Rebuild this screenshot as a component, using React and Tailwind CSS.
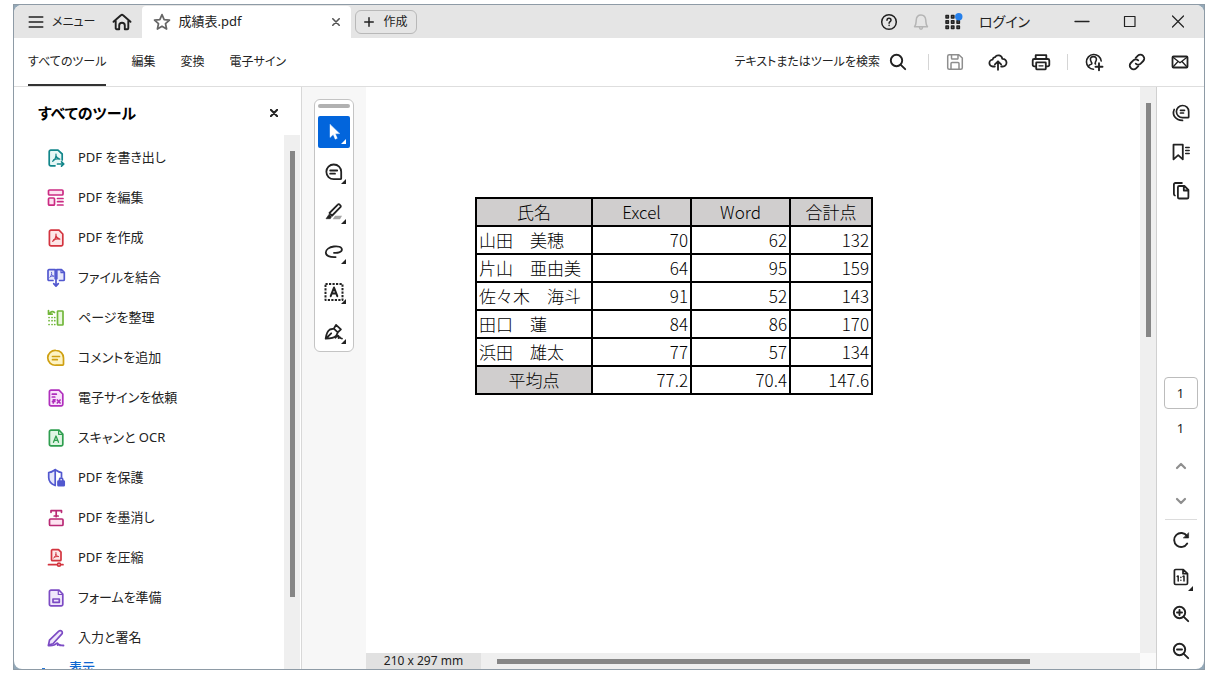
import { useState } from 'react'
import clsx from 'clsx'

function Icon({ children, className = 'size-5', width = 1.5 }) {
  return (
    <svg
      viewBox="0 0 20 20"
      className={clsx('shrink-0', className)}
      fill="none"
      stroke="currentColor"
      strokeWidth={width}
      strokeLinecap="round"
      strokeLinejoin="round"
      aria-hidden="true"
    >
      {children}
    </svg>
  )
}

const PAGE = 'M5 2.200h8L16.800 6v10.200a1.600 1.600 0 0 1-1.600 1.600H5a1.600 1.600 0 0 1-1.600-1.600V3.800A1.600 1.600 0 0 1 5 2.200z'
const ACRO = 'M10 6c.4 2.600-1.200 6-3.400 7.300M9.900 7.500c.5 2.200 1.700 3.300 3.900 3.700M7.600 11.900c1.700-.9 3.900-1.200 6-.7'

const tools = [
  {
    label: 'PDF を書き出し',
    color: 'text-[#12868a]',
    icon: (
      <>
        <path d="M9 17.800H4.800A1.600 1.600 0 0 1 3.200 16.200V3.800A1.600 1.600 0 0 1 4.800 2.200H12L16.200 6v6" fill="#e6f7f6" />
        <path d={ACRO} strokeWidth="1.200" />
        <path d="M11.500 16h6M15.500 13.800l2.300 2.200-2.300 2.200" />
      </>
    ),
  },
  {
    label: 'PDF を編集',
    color: 'text-[#cb2b83]',
    icon: (
      <>
        <rect x="2.500" y="2" width="14.500" height="5" rx="1" fill="#fde3f1" />
        <rect x="2.500" y="10" width="6" height="7.200" rx="1" fill="#fde3f1" />
        <path d="M11.500 10.500h5.500M11.500 13.700h5.500M11.500 17h5.500" />
      </>
    ),
  },
  {
    label: 'PDF を作成',
    color: 'text-[#d3343f]',
    icon: (
      <>
        <path d={PAGE} fill="#fde6e7" />
        <path d={ACRO} strokeWidth="1.200" />
      </>
    ),
  },
  {
    label: 'ファイルを結合',
    color: 'text-[#5258cf]',
    icon: (
      <>
        <path d="M7 12.500H3A1 1 0 0 1 2 11.500V2.700a1 1 0 0 1 1-1h6.200v9M10.800 10.700v-9h4.700l2.800 2.600v7.200a1 1 0 0 1-1 1H13.500" fill="#e6e7fb" />
        <path d="M15 1.900v2.800h3" strokeWidth="1.200" />
        <path d="M5.600 4.300c.5 2-.6 4-1.700 5M5.700 6.500c.6 1.200 1.200 1.600 2.200 1.700M4.300 8.600c1-.5 2-.6 3.200-.5" strokeWidth=".9" />
        <path d="M10 10v8M7.700 15.700 10 18.200l2.300-2.500" />
      </>
    ),
  },
  {
    label: 'ページを整理',
    color: 'text-[#72b73b]',
    icon: (
      <>
        <rect x="11.500" y="3" width="5.500" height="14" rx=".6" fill="#eaf7df" />
        <path d="M3.500 5.500C5 3.500 7 3 8.500 4.500M2.500 2.500v3.700h3.700" />
        <path d="M3 9.500h.1M3 12.700h.1M3 16.500h.1M6 16.500h.1M8.700 16.500h.1M8.700 12.700h.1M8.700 9.500h.1M6 9.500h.1M6 12.700h.1" strokeWidth="1.700" />
      </>
    ),
  },
  {
    label: 'コメントを追加',
    color: 'text-[#cfa012]',
    icon: (
      <>
        <path d="M10 2.500c4.300 0 7.500 3.300 7.500 7.500v6.300a.9.900 0 0 1-.9.900H10a7.400 7.400 0 1 1 0-14.700z" fill="#fdf3c4" />
        <path d="M6.500 8.500h7M6.500 11.700h4.800" />
      </>
    ),
  },
  {
    label: '電子サインを依頼',
    color: 'text-[#b02fbd]',
    icon: (
      <>
        <path d={PAGE} fill="#f9e3fb" />
        <path d="M6.300 6.200h4M6.300 9h2.500M7.300 15v-3.200h1.800M6.500 13.500h2.300M11.300 12l2.800 3M14.100 12l-2.800 3" />
      </>
    ),
  },
  {
    label: 'スキャンと OCR',
    color: 'text-[#2f9e4f]',
    icon: (
      <>
        <path d={PAGE} fill="#e0f5e4" />
        <path d="M12.600 2.500v3.800h4" strokeWidth="1.200" />
        <path d="M7.500 14.300 10 8l2.500 6.300M8.300 12.300h3.400" strokeWidth="1.300" />
      </>
    ),
  },
  {
    label: 'PDF を保護',
    color: 'text-[#5258cf]',
    icon: (
      <>
        <path d="M9.200 1.700C7 3.300 5 4.300 2.700 4.500v5c0 3.700 2.600 6.500 6.500 8z" fill="#e6e7fb" />
        <path d="M15.500 9V4.500C13.500 4.300 11.500 3.300 9.200 1.700" />
        <rect x="12" y="13" width="6.200" height="4.700" rx=".5" fill="currentColor" />
        <path d="M13.500 13v-1.200a1.650 1.650 0 0 1 3.300 0V13" />
      </>
    ),
  },
  {
    label: 'PDF を墨消し',
    color: 'text-[#b92a75]',
    icon: (
      <>
        <rect x="3.500" y="11" width="13.500" height="6.500" rx="1" fill="#fde3f1" />
        <path d="M5 4.300V2.700h10.500v1.600M10.200 2.700v6M8.200 8h4" />
      </>
    ),
  },
  {
    label: 'PDF を圧縮',
    color: 'text-[#d3343f]',
    icon: (
      <>
        <path d="M6.500 1.700h6l2.500 2.500v7.500a1 1 0 0 1-1 1H6.500a1 1 0 0 1-1-1v-9a1 1 0 0 1 1-1z" fill="#fde6e7" />
        <path d="M10 4.500c.4 2-.8 4.500-2.300 5.500M9.900 6.300c.5 1.500 1.300 2 2.600 2.200M8.200 9.300c1-.6 2.500-.9 4-.7" strokeWidth="1" />
        <path d="M2.500 16.700h8.500M15 16.700h2" />
        <circle cx="13" cy="16.700" r="1.500" />
      </>
    ),
  },
  {
    label: 'フォームを準備',
    color: 'text-[#7c4bc4]',
    icon: (
      <>
        <path d={PAGE} fill="#efe6fb" />
        <path d="M12.300 2.500v4h4" strokeWidth="1.200" />
        <rect x="7" y="11" width="6.300" height="3.300" />
      </>
    ),
  },
  {
    label: '入力と署名',
    color: 'text-[#7c4bc4]',
    icon: (
      <>
        <path d="M2.500 17l1-4.800 9.300-9a2 2 0 0 1 2.900 0 2 2 0 0 1 0 2.900L7 15.700z" fill="#efe6fb" />
        <path d="M2.500 17.500c4.500.3 6.500-.3 8-2 1.200-1.200 1.700.3 1.200 1.600 1-.8 1.800-.8 2.300.2.800-.2 2 .2 3.500.2" strokeWidth="1.800" />
      </>
    ),
  },
]

const quickTools = [
  {
    label: '選択',
    icon: <path d="M6 2.500v13l3.200-3 2 4.700 2.100-.9-2-4.500 4.200-.2z" fill="currentColor" strokeWidth=".4" />,
  },
  {
    label: 'コメント',
    icon: (
      <>
        <path d="M9.700 2.500c4.400 0 7.500 3.100 7.500 7.300v6.400a1 1 0 0 1-1 1H9.700a7.350 7.350 0 1 1 0-14.700z" />
        <path d="M6.200 8.500h7M6.200 11.700h4.800" />
      </>
    ),
  },
  {
    label: 'ハイライト',
    icon: (
      <>
        <path d="M7 12.700 5.500 11 13.800 2.600a1.300 1.300 0 0 1 1.900 0l.7.700a1.300 1.300 0 0 1 0 1.900L8.200 13.500z" />
        <path d="M5.300 12 2 16.700h4.300l1.200-1.900z" fill="currentColor" strokeWidth=".6" />
        <path d="M11 13.700h7L16 17.200H8.700z" fill="#a3a3a3" stroke="none" />
      </>
    ),
  },
  {
    label: '描画',
    icon: <path d="M10 10.800c3.200.5 7.900-.4 7.900-3.300 0-2.800-4.300-3.500-8-3C5.300 5.100 1.800 7.500 1.800 10.600c0 3.200 3.800 4.800 9.800 4.500" />,
  },
  {
    label: 'テキスト',
    icon: (
      <>
        <rect x="1.500" y="2" width="17" height="16" strokeDasharray="2.200 1.300" strokeLinecap="butt" strokeWidth="2" />
        <path d="M6.700 14.200 10 5.500l3.300 8.700M7.900 11.500h4.200" strokeWidth="2" />
      </>
    ),
  },
  {
    label: '署名',
    icon: (
      <>
        <path d="M1.700 16.700c.5-4.200 1.600-7.700 4.200-9.200l3.900-.8 4 3.700-1.500 3.300c-1.600 1.800-5.500 3-10.600 3zM2 16.500l5.200-5.200M9.800 6.700 12 2.900l4.900 4.500-3.100 3" />
        <path d="M11.500 15.800c1.700-2.100 3.300-3 3-1-.3 1.600 0 1.800 1.300.3.300 1 .8 1.500 2.200 1.500" />
      </>
    ),
  },
]

const rows = [
  ['山田　美穂', '70', '62', '132'],
  ['片山　亜由美', '64', '95', '159'],
  ['佐々木　海斗', '91', '52', '143'],
  ['田口　蓮', '84', '86', '170'],
  ['浜田　雄太', '77', '57', '134'],
]

const tabs = ['すべてのツール', '編集', '変換', '電子サイン']

function IconButton({ label, children, className = 'size-5' }) {
  return (
    <button type="button" aria-label={label} className={clsx('relative flex items-center justify-center', className)}>
      {children}
    </button>
  )
}

// Small triangle that marks a tool with more options
function Corner({ className }) {
  return (
    <svg viewBox="0 0 5 5" className={clsx('absolute size-[5px]', className)} aria-hidden="true">
      <path d="M5 0v5H0z" fill="currentColor" />
    </svg>
  )
}

function TitleBar() {
  return (
    <header className="flex h-[33px] shrink-0 bg-[#e5e5e5]">
      <button type="button" className="flex items-center gap-2 pl-3.5 text-xs">
        <Icon className="size-4" width={1.800}>
          <path d="M1.500 3.800h17M1.500 10h17M1.500 16.200h17" />
        </Icon>
        メニュー
      </button>
      <IconButton label="ホーム" className="my-auto ml-4 mr-2.5 size-5">
        <Icon width={1.900}>
          <path d="M1.500 9.800 8.900 3.200a1.600 1.600 0 0 1 2.200 0l7.400 6.600M3.700 9v7.200a1 1 0 0 0 1 1h2.500v-3.600a2.800 2.800 0 0 1 5.600 0v3.600h2.500a1 1 0 0 0 1-1V9" />
        </Icon>
      </IconButton>
      <div className="mt-px flex w-[209px] items-center gap-2 rounded-t-sm bg-white px-[11px] text-[13px]">
        <Icon className="size-[18px] text-[#666]" width={1.900}>
          <path d="M10 1.800l2.400 5.500 5.900.6-4.400 4 1.200 5.900L10 14.800l-5.100 3 1.200-5.900-4.400-4 5.900-.6z" />
        </Icon>
        <span className="flex-1">成績表.pdf</span>
        <IconButton label="タブを閉じる" className="size-2 text-[#555]">
          <Icon className="size-2" width={4}>
            <path d="M2 2l16 16M18 2 2 18" />
          </Icon>
        </IconButton>
      </div>
      <button type="button" className="my-auto ml-1 flex h-6 items-center gap-2.5 rounded-md border border-[#b8b8b8] px-2 text-xs">
        <Icon className="size-2.5" width={3}>
          <path d="M10 1.500v17M1.500 10h17" />
        </Icon>
        作成
      </button>
      <div className="ml-auto flex items-center gap-3">
        <IconButton label="ヘルプ">
          <Icon>
            <circle cx="10" cy="10" r="7.300" />
            <path d="M8 8.200c.1-2.600 4-2.400 4 0 0 1.500-1.900 1.400-1.900 3M10.100 13.300v.1" />
          </Icon>
        </IconButton>
        <IconButton label="通知" className="size-5 text-[#b5b5b5]">
          <Icon>
            <path d="M3.500 14.700c1.700-1.500 1.500-3.500 1.700-6.400C5.400 5.200 7.400 3 10 3s4.600 2.200 4.800 5.300c.2 2.900 0 4.900 1.700 6.400zM8.500 15.500c.2 2.300 2.800 2.300 3 0" />
          </Icon>
        </IconButton>
        <IconButton label="アプリ">
          <Icon width={1.500}>
            {[4, 9.200, 14.400].map((y) =>
              [3.500, 9, 14.500].map((x) => <rect key={`${x}-${y}`} x={x - 0.500} y={y - 0.400} width="2.400" height="2.400" fill="#777" />)
            )}
            <circle cx="15.800" cy="4.800" r="3.700" fill="#2680eb" stroke="none" />
          </Icon>
        </IconButton>
        <button type="button" className="mr-7 ml-1 text-sm">ログイン</button>
      </div>
      <div className="flex pr-0.5">
        <button type="button" aria-label="最小化" className="flex w-12 items-center justify-center">
          <Icon width={1.300}><path d="M3 9.500h14" /></Icon>
        </button>
        <button type="button" aria-label="最大化" className="flex w-12 items-center justify-center">
          <Icon width={1.200}><path d="M4.500 4.500h10.500v10H4.500z" /></Icon>
        </button>
        <button type="button" aria-label="閉じる" className="flex w-12 items-center justify-center">
          <Icon width={1.200}><path d="M4.500 4l11 11M15.500 4l-11 11" /></Icon>
        </button>
      </div>
    </header>
  )
}

function Toolbar() {
  const [active, setActive] = useState(tabs[0])

  return (
    <div className="flex h-[49px] shrink-0 items-center border-b border-[#dedede] px-3.5">
      <nav className="flex gap-[25px] self-stretch text-xs">
        {tabs.map((tab) => (
          <button
            key={tab}
            type="button"
            onClick={() => setActive(tab)}
            className={clsx('border-y-2 border-t-transparent', tab === active ? 'border-b-[#333]' : 'border-b-transparent')}
          >
            {tab}
          </button>
        ))}
      </nav>
      <div className="ml-auto flex items-center gap-4">
        <button type="button" className="mr-1 flex items-center gap-2 text-xs">
          テキストまたはツールを検索
          <Icon width={1.900}>
            <circle cx="8.500" cy="8.500" r="5.700" />
            <path d="M12.800 12.800 17.200 17.200" />
          </Icon>
        </button>
        <span className="h-4 w-px bg-[#d5d5d5]" />
        <div className="flex gap-[23px]">
          <IconButton label="保存" className="size-5 text-[#8e8e8e]">
            <Icon>
              <path d="M4.200 2.700h9.600l3.500 3.300v9.800a1.500 1.500 0 0 1-1.500 1.500H4.200a1.500 1.500 0 0 1-1.500-1.500V4.200a1.500 1.500 0 0 1 1.500-1.500zM6 17v-5.500a1 1 0 0 1 1-1h6a1 1 0 0 1 1 1V17M6.500 3v3.300a.8.800 0 0 0 .8.800h4.900a.8.800 0 0 0 .8-.8V3" />
            </Icon>
          </IconButton>
          <IconButton label="アップロード">
            <Icon width={1.800}>
              <path d="M6.800 14.500H5a3.400 3.400 0 0 1-.4-6.800A3.200 3.200 0 0 1 7 5.200a4 4 0 0 1 7.300 1.600c2.500-.2 4.200 1.700 4.200 3.800a3.700 3.700 0 0 1-3.800 3.900h-1.500M10 17.800V9.500M6.900 12.300 10 9.300l3.100 3" />
            </Icon>
          </IconButton>
          <IconButton label="印刷">
            <Icon width={1.800}>
              <path d="M5 14.300H3.200a1.500 1.500 0 0 1-1.500-1.500V8.500A1.500 1.500 0 0 1 3.200 7h13.600a1.500 1.500 0 0 1 1.500 1.500v4.300a1.500 1.500 0 0 1-1.500 1.500H15M4.700 6.800V3.200h10.600v3.600" />
              <rect x="5.200" y="10.300" width="9.600" height="7" rx=".5" />
              <path d="M8 13.800h4" strokeWidth="1.300" />
            </Icon>
          </IconButton>
        </div>
        <span className="h-4 w-px bg-[#d5d5d5]" />
        <div className="flex gap-[23px]">
          <IconButton label="共有">
            <Icon width={1.600}>
              <path d="M9.500 17.300A7.400 7.400 0 1 1 17.200 9" />
              <path d="M4.500 14.700c.3-1.800 1.500-2.300 2.700-2.500.9-.2.700-1.200.2-1.900-2-3-1-5.700 2-5.700s4 2.700 2 5.700c-.4.700-.4 1.400.1 1.700" />
              <path d="M15 11.300v6.900M11.500 14.800h7" strokeWidth="1.900" />
            </Icon>
          </IconButton>
          <IconButton label="リンク">
            <Icon width={1.800}>
              <path d="M8.700 5.900l2.200-2.200a3.500 3.500 0 0 1 4.950 0l.4.400a3.500 3.500 0 0 1 0 4.900l-2.600 2.600a3.500 3.500 0 0 1-4.900 0" />
              <path d="M11.300 14.100l-2.200 2.200a3.500 3.500 0 0 1-4.950 0l-.4-.4a3.500 3.500 0 0 1 0-4.900l2.600-2.600a3.500 3.500 0 0 1 4.900 0" />
            </Icon>
          </IconButton>
          <IconButton label="メール">
            <Icon width={1.800}>
              <rect x="2.500" y="4.500" width="15" height="11" rx="1" />
              <path d="M3 5.200l7 5.600 7-5.600M3 15l5-5.500M17 15l-5-5.500" strokeWidth="1.300" />
            </Icon>
          </IconButton>
        </div>
      </div>
    </div>
  )
}

function Sidebar() {
  return (
    <aside className="flex w-72 shrink-0 flex-col border-r border-[#d8d8d8]">
      <div className="flex h-12 shrink-0 items-center justify-between pt-1 pr-[23px] pl-6">
        <h2 className="text-[15px] font-bold text-black">すべてのツール</h2>
        <IconButton label="パネルを閉じる" className="size-2">
          <Icon className="size-2" width={5}>
            <path d="M2 2l16 16M18 2 2 18" />
          </Icon>
        </IconButton>
      </div>
      <div className="flex min-h-0 flex-1 pr-px">
        <div className="flex-1 overflow-hidden pt-[3px]">
          <ul>
            {tools.map((tool) => (
              <li key={tool.label}>
                <button type="button" className="flex h-10 w-full items-center gap-3 pl-8 text-left text-[13px]">
                  <Icon className={clsx('size-5', tool.color)} width={1.700}>{tool.icon}</Icon>
                  {tool.label}
                </button>
              </li>
            ))}
          </ul>
          <a href="#view" className="flex h-5 items-center gap-6 pl-7 text-[13px] font-medium text-[#0d66d0]">
            <Icon className="size-[3px]" width={6}><path d="M0 10h20" /></Icon>
            表示
          </a>
        </div>
        <div className="flex w-4 justify-center bg-[#efefef] pt-4 pb-[72px]">
          <div className="w-[5px] bg-[#868686]" />
        </div>
      </div>
    </aside>
  )
}

function QuickTools() {
  const [active, setActive] = useState(0)

  return (
    <div className="w-16 shrink-0 bg-[#f7f7f7] px-3 pt-3">
      <div className="flex flex-col items-center gap-2 rounded-md border border-[#c4c4c4] bg-white pt-1 pb-[3px]">
        <div className="h-1 w-8 rounded-full bg-[#b1b1b1]" />
        {quickTools.map((tool, index) => (
          <button
            key={tool.label}
            type="button"
            aria-label={tool.label}
            onClick={() => setActive(index)}
            className={clsx(
              'relative flex size-8 items-center justify-center rounded-xs',
              active === index ? 'bg-[#0265dc] text-white' : 'text-[#222]'
            )}
          >
            <Icon width={1.800}>{tool.icon}</Icon>
            <Corner className="right-1 bottom-1" />
          </button>
        ))}
      </div>
    </div>
  )
}

function ScoreTable() {
  const cell = 'border-2 border-black px-0.5'
  const head = 'border-2 border-black bg-[#d0cece] text-center font-light'

  return (
    <table className="w-[398px] table-fixed border-collapse font-['Noto_Sans_CJK_JP',sans-serif] text-[17px] leading-[26px] font-light text-black [font-feature-settings:normal]">
      <colgroup>
        <col className="w-[116px]" />
        <col className="w-[99px]" />
        <col className="w-[99px]" />
        <col />
      </colgroup>
      <thead>
        <tr>
          {['氏名', 'Excel', 'Word', '合計点'].map((title) => (
            <th key={title} scope="col" className={head}>{title}</th>
          ))}
        </tr>
      </thead>
      <tbody>
        {rows.map(([name, ...scores]) => (
          <tr key={name}>
            <td className={cell}>{name}</td>
            {scores.map((score, i) => (
              <td key={i} className={clsx(cell, 'text-right')}>{score}</td>
            ))}
          </tr>
        ))}
      </tbody>
      <tfoot>
        <tr>
          <th scope="row" className={head}>平均点</th>
          {['77.2', '70.4', '147.6'].map((avg) => (
            <td key={avg} className={clsx(cell, 'text-right')}>{avg}</td>
          ))}
        </tr>
      </tfoot>
    </table>
  )
}

function DocumentView() {
  return (
    <main className="flex min-w-0 flex-1 flex-col">
      <div className="flex min-h-0 flex-1">
        <div className="min-w-0 flex-1 overflow-hidden bg-white pt-[110px] pl-[109px]">
          <ScoreTable />
        </div>
        <div className="flex w-4 items-start justify-center bg-[#efefef] pt-4">
          <div className="h-[234px] w-[5px] bg-[#868686]" />
        </div>
      </div>
      <div className="flex h-4 shrink-0 bg-[#efefef]">
        <div className="flex w-[115px] items-center justify-center bg-[#e1e1e1] text-xs leading-4">210 x 297 mm</div>
        <div className="flex flex-1 items-center pr-[110px] pl-4">
          <div className="h-[5px] flex-1 bg-[#868686]" />
        </div>
        <div className="w-4 bg-[#fafafa]" />
      </div>
    </main>
  )
}

function Rail() {
  return (
    <aside className="flex w-12 shrink-0 flex-col items-center justify-between border-l border-[#d0d0d0] pt-4 pb-2">
      <div className="flex flex-col gap-[19px]">
        <IconButton label="コメント">
          <Icon width={1.700}>
            <path d="M11.500 2.500c3.500 0 6.200 2.600 6.200 6v5.400a.8.800 0 0 1-.8.800h-5.400a6.100 6.100 0 1 1 0-12.200z" />
            <path d="M9.500 7.300h4M9.500 10h3M3.200 6.500c-2.400 5.500 1.500 11 8.300 10.900" />
          </Icon>
        </IconButton>
        <IconButton label="しおり">
          <Icon width={1.800}>
            <path d="M2.500 2.700h9.300v14.600l-4.600-4.200-4.700 4.200z" />
            <path d="M14.700 5.500h3.500M14.700 8.500h3.500M14.700 11.500h3.500" strokeWidth="1.500" />
          </Icon>
        </IconButton>
        <IconButton label="ページサムネール">
          <Icon width={1.800}>
            <path d="M8.200 5h5.200l4 3.900v7.300a1.300 1.300 0 0 1-1.300 1.300H8.200a1.300 1.300 0 0 1-1.300-1.300V6.300A1.300 1.300 0 0 1 8.200 5zM12.800 5.300v4.200h4.300" />
            <path d="M3.900 14.500a1.500 1.500 0 0 1-1-1.400V3.500A1.500 1.500 0 0 1 4.400 2h6.500" />
          </Icon>
        </IconButton>
      </div>
      <div className="flex flex-col items-center">
        <input
          aria-label="ページ番号"
          defaultValue="1"
          className="h-8 w-[34px] rounded-sm border border-[#bcbcbc] text-center text-[13px]"
        />
        <span className="mt-[9px] text-[13px] leading-5">1</span>
        <IconButton label="前のページ" className="mt-[18px] size-5 text-[#8e8e8e]">
          <Icon width={2.200}><path d="M6 12l4-4 4 4" /></Icon>
        </IconButton>
        <IconButton label="次のページ" className="mt-[15px] size-5 text-[#8e8e8e]">
          <Icon width={2.200}><path d="M6 8l4 4 4-4" /></Icon>
        </IconButton>
        <span className="my-2 h-px w-8 bg-[#dcdcdc]" />
        <div className="mt-0.5 flex flex-col gap-[17px]">
          <IconButton label="回転">
            <Icon width={1.900}>
              <path d="M16.200 13.500a7 7 0 1 1-.3-7.600" />
              <path d="M17.600 3v5h-5z" fill="currentColor" strokeWidth=".6" />
            </Icon>
          </IconButton>
          <IconButton label="実際のサイズ">
            <Icon width={1.700}>
              <path d="M4.700 2.500h7.600l4.200 4v9.700a1.300 1.300 0 0 1-1.300 1.300H4.700a1.300 1.300 0 0 1-1.300-1.300V3.800a1.300 1.300 0 0 1 1.300-1.300zM12 2.700v4h4.300" />
              <path d="M6.200 9.500l1-.5v5M12 9.500l1-.5v5M9.900 10.300v.1M9.900 13.200v.1" strokeWidth="1.500" />
            </Icon>
            <Corner className="-right-0.5 -bottom-1" />
          </IconButton>
          <IconButton label="拡大">
            <Icon width={1.900}>
              <circle cx="8.500" cy="8.500" r="5.700" />
              <path d="M12.800 12.800 17.200 17.200M8.500 6v5M6 8.500h5" />
            </Icon>
          </IconButton>
          <IconButton label="縮小">
            <Icon width={1.900}>
              <circle cx="8.500" cy="8.500" r="5.700" />
              <path d="M12.800 12.800 17.200 17.200M6 8.500h5" />
            </Icon>
          </IconButton>
        </div>
      </div>
    </aside>
  )
}

function App() {
  return (
    <div className="flex h-screen bg-white pt-1 pr-[13px] pb-1.5 pl-[13px] font-['Noto_Sans','Noto_Sans_CJK_JP',sans-serif] text-[#222] [font-feature-settings:'palt']" lang="ja">
      <div className="flex min-w-0 flex-1 border border-[#8e9ba6] bg-[#93a8b8]">
        <div className="flex min-w-0 flex-1 flex-col overflow-hidden rounded-lg bg-white">
          <TitleBar />
          <Toolbar />
          <div className="flex min-h-0 flex-1">
            <Sidebar />
            <QuickTools />
            <DocumentView />
            <Rail />
          </div>
        </div>
      </div>
    </div>
  )
}

export default App
